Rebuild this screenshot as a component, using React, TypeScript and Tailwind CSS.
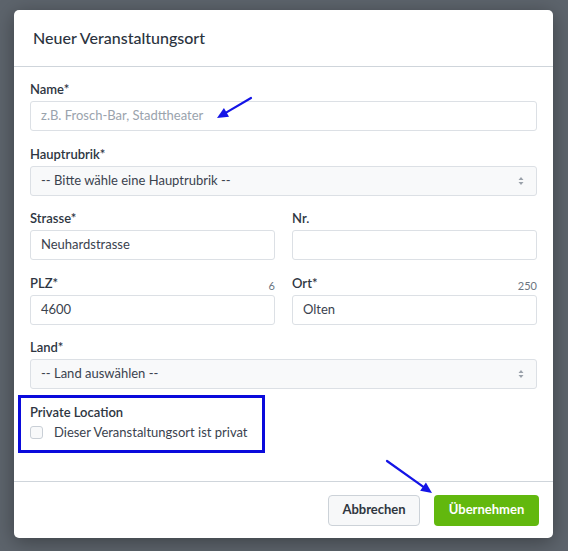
import React from 'react';

const font = { fontFamily: 'Lato, "Open Sans", sans-serif' };

function Label({ text, counter }: { text: string; counter?: string }) {
  return (
    <div className="flex h-[18px] items-center justify-between mb-[2px]">
      <span className="text-[13px] font-semibold text-[#2e3642]">{text}</span>
      {counter && <span className="text-[11px] text-[#6b7480] mt-[5px]">{counter}</span>}
    </div>
  );
}

function Input({ value, placeholder }: { value?: string; placeholder?: string }) {
  return (
    <div className="flex h-[30px] items-center rounded-[3px] border border-[#dce0e5] bg-white px-[10px] text-[13px]">
      {value ? (
        <span className="text-[#3a424e]">{value}</span>
      ) : (
        <span className="text-[#9aa3ad]">{placeholder}</span>
      )}
    </div>
  );
}

function Select({ value }: { value: string }) {
  return (
    <div className="flex h-[30px] items-center justify-between rounded-[3px] border border-[#dce0e5] bg-[#f8f9fa] pl-[10px] pr-[12px] text-[13px] text-[#3a424e]">
      <span>{value}</span>
      <svg width="6" height="10" viewBox="0 0 6 10" className="text-[#9aa1aa]">
        <path d="M3 1 L5.5 4 H0.5 Z M3 9 L5.5 6 H0.5 Z" fill="currentColor" />
      </svg>
    </div>
  );
}

function Arrow({ x1, y1, x2, y2 }: { x1: number; y1: number; x2: number; y2: number }) {
  const ang = Math.atan2(y2 - y1, x2 - x1);
  const len = 11;
  const w = 5;
  const bx = x2 - Math.cos(ang) * len;
  const by = y2 - Math.sin(ang) * len;
  const px = -Math.sin(ang) * w;
  const py = Math.cos(ang) * w;
  return (
    <g>
      <line x1={x1} y1={y1} x2={bx} y2={by} stroke="#1414e6" strokeWidth="2.2" strokeLinecap="round" />
      <polygon points={`${x2},${y2} ${bx + px},${by + py} ${bx - px},${by - py}`} fill="#1414e6" />
    </g>
  );
}

export default function App() {
  return (
    <div className="relative h-[551px] w-[568px] overflow-hidden bg-[#5d646c] pl-[14px] pt-[10px]" style={font}>
      <div className="flex h-[528px] w-[539px] flex-col rounded-[5px] bg-white shadow-[0_4px_20px_rgba(0,0,0,0.35)]">
        <div className="flex h-[57px] shrink-0 items-center border-b border-[#cfd5db] px-[19px]">
          <h2 className="text-[16px] font-medium text-[#2b333e]">Neuer Veranstaltungsort</h2>
        </div>

        <div className="flex flex-1 flex-col gap-[14.5px] px-[16px] pt-[14px]">
          <div>
            <Label text="Name*" />
            <Input placeholder="z.B. Frosch-Bar, Stadttheater" />
          </div>
          <div>
            <Label text="Hauptrubrik*" />
            <Select value="-- Bitte wähle eine Hauptrubrik --" />
          </div>
          <div className="grid grid-cols-2 gap-[17px]">
            <div>
              <Label text="Strasse*" />
              <Input value="Neuhardstrasse" />
            </div>
            <div>
              <Label text="Nr." />
              <Input />
            </div>
          </div>
          <div className="grid grid-cols-2 gap-[17px]">
            <div>
              <Label text="PLZ*" counter="6" />
              <Input value="4600" />
            </div>
            <div>
              <Label text="Ort*" counter="250" />
              <Input value="Olten" />
            </div>
          </div>
          <div>
            <Label text="Land*" />
            <Select value="-- Land auswählen --" />
          </div>
          <div>
            <Label text="Private Location" />
            <label className="flex h-[18px] items-center gap-[11px] text-[13px] text-[#3a424e]">
              <span className="h-[13px] w-[13px] rounded-[3px] border border-[#c9cfd6] bg-[#f8f9fa]" />
              Dieser Veranstaltungsort ist privat
            </label>
          </div>
        </div>

        <div className="flex h-[57px] shrink-0 items-center justify-end gap-[14px] border-t border-[#cfd5db] px-[14px]">
          <button className="h-[31px] w-[92px] rounded-[4px] border border-[#ccd2d8] bg-[#f7f8f9] text-[13px] font-bold text-[#2f3640]">
            Abbrechen
          </button>
          <button className="h-[31px] w-[105px] rounded-[4px] bg-[#62b80e] text-[13px] font-bold text-white">
            Übernehmen
          </button>
        </div>
      </div>

      {/* Markierung */}
      <div className="pointer-events-none absolute left-[18px] top-[395px] h-[58px] w-[247px] border-[3px] border-[#0b0bdc]" />
      <svg className="pointer-events-none absolute inset-0" width="568" height="551">
        <Arrow x1={251} y1={98} x2={217} y2={118} />
        <Arrow x1={387} y1={461} x2={432} y2={493} />
      </svg>
    </div>
  );
}
